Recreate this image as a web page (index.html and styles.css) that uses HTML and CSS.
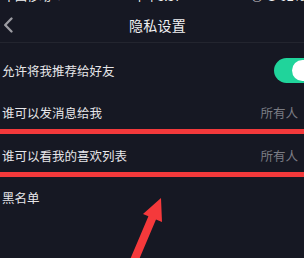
FILE: index.html
```html
<!DOCTYPE html>
<html lang="zh">
<head>
<meta charset="utf-8">
<link rel="stylesheet" href="styles.css">
</head>
<body>
<div class="screen">
  <div class="status">
    <span class="carrier">中国移动 ✦</span>
    <span class="time">下午3:37</span>
    <span class="battery">◎ ● 92%</span>
  </div>
  <div class="header">
    <svg class="back" width="10" height="16" viewBox="0 0 10 16"><path d="M8.5 1.5 L2.2 8 L8.5 14.5" fill="none" stroke="#9c9ca2" stroke-width="2.3" stroke-linecap="round" stroke-linejoin="round"/></svg>
    <div class="title">隐私设置</div>
  </div>
  <div class="list">
    <div class="row">
      <span class="label">允许将我推荐给好友</span>
      <span class="toggle"><span class="knob"></span></span>
    </div>
    <div class="row">
      <span class="label">谁可以发消息给我</span>
      <span class="value">所有人</span>
    </div>
    <div class="row">
      <span class="label">谁可以看我的喜欢列表</span>
      <span class="value">所有人</span>
    </div>
    <div class="row">
      <span class="label">黑名单</span>
    </div>
  </div>
  <div class="mark mark-1"></div>
  <div class="mark mark-2"></div>
  <svg class="arrow" width="304" height="258" viewBox="0 0 304 258"><polygon points="161,198 162,222 156,219.5 138,262 129,262 148.4,216.3 143,214" fill="#f5393b"/></svg>
</div>
</body>
</html>
```

FILE: styles.css
```css
html, body {
  margin: 0;
  padding: 0;
  overflow: hidden;
  background: #161823;
}
body {
  font-family: "Noto Sans CJK SC", "Noto Sans", sans-serif;
  color: #e9e9eb;
}
.screen {
  position: relative;
  width: 315px;
  height: 258px;
  overflow: hidden;
}
.status {
  height: 3px;
  overflow: hidden;
  display: flex;
  align-items: flex-end;
  font-size: 12px;
  line-height: 14px;
  color: #f2f2f2;
}
.status span {
  flex: none;
}
.carrier { margin-left: 3px; }
.time { margin-left: 70px; }
.battery { margin-left: 70px; }
.header {
  box-sizing: border-box;
  height: 40px;
  padding-top: 4px;
  display: flex;
  align-items: center;
  border-bottom: 1px solid #23252f;
}
.back {
  flex: none;
  margin-left: 3px;
}
.title {
  flex: 1;
  text-align: center;
  font-size: 14px;
  color: #f0f0f2;
  margin-right: 13px;
  letter-spacing: 0.2px;
}
.list {
  padding-top: 6px;
  display: flex;
  flex-direction: column;
}
.row {
  height: 42.5px;
  display: flex;
  align-items: center;
  justify-content: space-between;
  padding-left: 2px;
  font-size: 12.5px;
}
.label {
  color: #e6e6e9;
}
.value {
  color: #7b7c83;
  margin-right: 17px;
}
.toggle {
  width: 41px;
  height: 25px;
  border-radius: 13px;
  background: #20d49b;
  position: relative;
  flex: none;
}
.knob {
  position: absolute;
  left: 18px;
  top: 2px;
  width: 21px;
  height: 21px;
  border-radius: 50%;
  background: #ffffff;
}
.mark {
  position: absolute;
  left: 0;
  width: 315px;
  height: 5px;
  background: #f3393b;
}
.mark-1 { top: 129px; }
.mark-2 { top: 172px; }
.arrow {
  position: absolute;
  left: 0;
  top: 0;
}
```
